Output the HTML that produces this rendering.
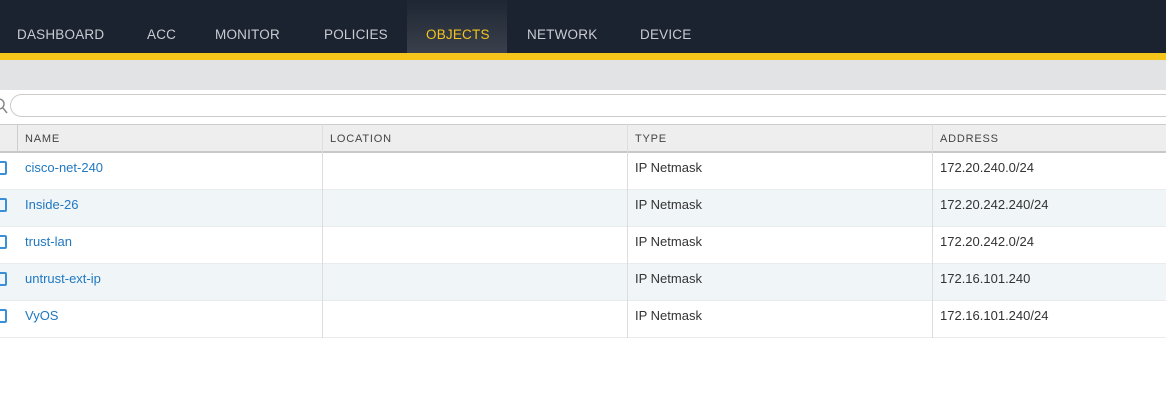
<!DOCTYPE html>
<html><head><style>
*{margin:0;padding:0;box-sizing:border-box}
body{width:1166px;height:402px;background:#fff;font-family:"Liberation Sans",sans-serif;position:relative;overflow:hidden}
.nav{position:absolute;left:0;top:0;width:1166px;height:53px;background:#1b2230}
.nav span{position:absolute;top:27px;font-size:13.5px;color:#c9ccd1;letter-spacing:0.2px}
.tab{position:absolute;left:407px;top:0;width:100px;height:53px;background:linear-gradient(#1e2633,#3a414c)}
.yb{position:absolute;left:0;top:53px;width:1166px;height:7px;background:#f6c51c}
.gb{position:absolute;left:0;top:60px;width:1166px;height:30px;background:#e2e3e5}
.search{position:absolute;left:10px;top:94px;width:1170px;height:23px;border:1px solid #ccc;border-radius:12px;background:#fff}
.hdr{position:absolute;left:0;top:124px;width:1166px;height:29px;background:#eeeeee;border-top:1px solid #ccc;border-bottom:2px solid #c8c8c8}
.hdr span{position:absolute;top:8px;font-size:11px;color:#444;letter-spacing:0.8px}
.row{position:absolute;left:0;width:1166px;height:37px;border-bottom:1px solid #e8ecef}
.row span{position:absolute;top:7px;font-size:13px;color:#333}
.row .n{color:#1f78c1}
.cb{position:absolute;left:-4px;top:8px;width:11px;height:14px;border:2px solid #3b8fd6;border-radius:2px}
.vl{position:absolute;width:1px;background:#ddd}
</style></head><body>
<div class="nav">
<div class="tab"></div>
<span style="left:17px">DASHBOARD</span>
<span style="left:147px">ACC</span>
<span style="left:215px">MONITOR</span>
<span style="left:324px">POLICIES</span>
<span style="left:426px;color:#f3c41f">OBJECTS</span>
<span style="left:527px">NETWORK</span>
<span style="left:640px">DEVICE</span>
</div>
<div class="yb"></div><div class="gb"></div>
<svg style="position:absolute;left:-6px;top:96px" width="14" height="20"><circle cx="5" cy="8" r="5" fill="none" stroke="#888" stroke-width="1.5"/><line x1="9" y1="12" x2="13" y2="17" stroke="#888" stroke-width="1.5"/></svg>
<div class="search"></div>
<div class="hdr">
<span style="left:25px">NAME</span><span style="left:330px">LOCATION</span><span style="left:635px">TYPE</span><span style="left:940px">ADDRESS</span>
</div>
<div class="vl" style="left:17px;top:124px;height:214px;background:#ccc"></div>
<div class="row" style="top:153px;background:#fff"><div class="cb"></div><span class="n" style="left:25px">cisco-net-240</span><span style="left:635px">IP Netmask</span><span style="left:940px">172.20.240.0/24</span></div>
<div class="row" style="top:190px;background:#f0f5f8"><div class="cb"></div><span class="n" style="left:25px">Inside-26</span><span style="left:635px">IP Netmask</span><span style="left:940px">172.20.242.240/24</span></div>
<div class="row" style="top:227px;background:#fff"><div class="cb"></div><span class="n" style="left:25px">trust-lan</span><span style="left:635px">IP Netmask</span><span style="left:940px">172.20.242.0/24</span></div>
<div class="row" style="top:264px;background:#f0f5f8"><div class="cb"></div><span class="n" style="left:25px">untrust-ext-ip</span><span style="left:635px">IP Netmask</span><span style="left:940px">172.16.101.240</span></div>
<div class="row" style="top:301px;background:#fff"><div class="cb"></div><span class="n" style="left:25px">VyOS</span><span style="left:635px">IP Netmask</span><span style="left:940px">172.16.101.240/24</span></div>
<div class="vl" style="left:322px;top:124px;height:214px"></div>
<div class="vl" style="left:627px;top:124px;height:214px"></div>
<div class="vl" style="left:932px;top:124px;height:214px"></div>
</body></html>
